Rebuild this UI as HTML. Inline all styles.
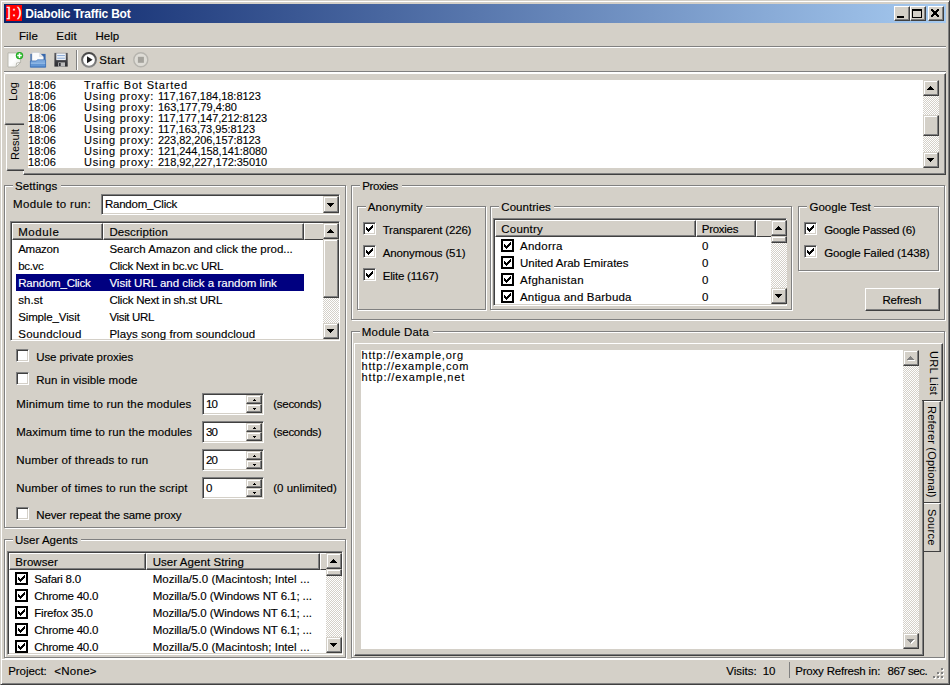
<!DOCTYPE html><html><head><meta charset="utf-8"><title>Diabolic Traffic Bot</title><style>
*{box-sizing:border-box}
html,body{margin:0;padding:0}
body{width:950px;height:685px;overflow:hidden;background:#d4d0c8;font-family:"Liberation Sans",sans-serif;font-size:12px;color:#000;position:relative}
#w div,#w span,#w svg.a{position:absolute}
#w{position:absolute;left:0;top:0;width:950px;height:685px;background:#d4d0c8;overflow:hidden}
.t{white-space:nowrap;line-height:14px;font-size:11.5px;-webkit-text-stroke:0.15px currentColor}
.grp{border:1px solid #808080;box-shadow:inset 1px 1px 0 #fff,1px 1px 0 #fff}
.gl{background:#d4d0c8;white-space:nowrap;line-height:14px;height:14px;padding-left:3px}
.sunk{border:1px solid;border-color:#808080 #fff #fff #808080;box-shadow:inset 1px 1px 0 #404040,inset -1px -1px 0 #d4d0c8}
.btn{background:#d4d0c8;border:1px solid;border-color:#fff #404040 #404040 #fff;box-shadow:inset -1px -1px 0 #808080,inset 1px 1px 0 #d4d0c8}
.hdr{background:#d4d0c8;border:1px solid;border-color:#fff #404040 #404040 #fff;box-shadow:inset -1px -1px 0 #808080;white-space:nowrap;line-height:14px}
.sb{border-color:#d4d0c8 #404040 #404040 #d4d0c8;box-shadow:inset -1px -1px 0 #808080,inset 1px 1px 0 #fff}
.hf{border-right:0;box-shadow:none}
.track{background:#eae8e4;background-image:conic-gradient(#fff 25%,#d4d0c8 0 50%,#fff 0 75%,#d4d0c8 0);background-size:2px 2px}
.fchk{border:2px solid #000;background:#fff}
.row{white-space:nowrap;line-height:17px;height:17px}
.log{font-size:11px;line-height:11px;white-space:pre;-webkit-text-stroke:0.12px currentColor}
.vt{white-space:nowrap;font-size:11px;line-height:12px;transform-origin:0 0}
</style></head><body><div id="w">
<div class="" style="left:0px;top:0px;width:950px;height:685px;border:1px solid;border-color:#d4d0c8 #404040 #404040 #d4d0c8;box-shadow:inset 1px 1px 0 #fff,inset -1px -1px 0 #808080;"></div>
<div class="" style="left:4px;top:4px;width:942px;height:19px;background:linear-gradient(90deg,#0a246a 0%,#a6caf0 100%);"></div>
<div class="" style="left:6px;top:5px;width:16px;height:16px;background:#ff0000;overflow:hidden"><span class="t" style="left:1.1px;top:-1px;letter-spacing:1.50px;color:#fff;font-size:13px;line-height:15px;-webkit-text-stroke:0.3px #fff">]:)</span></div>
<span class="t" style="left:25.2px;top:7px;letter-spacing:-0.20px;color:#fff;font-weight:bold;font-size:12px;line-height:15px;-webkit-text-stroke:0">Diabolic Traffic Bot</span>
<div class="btn" style="left:894px;top:6px;width:16px;height:15px;"><div style="left:2px;top:9px;width:7px;height:2px;background:#000"></div></div>
<div class="btn" style="left:910px;top:6px;width:16px;height:15px;"><div style="left:1px;top:2px;width:10px;height:9px;border:1px solid #000;border-top-width:2px"></div></div>
<div class="btn" style="left:928px;top:6px;width:16px;height:15px;"><svg class="a" style="left:2px;top:2px" width="8" height="8" viewBox="0 0 8 8" shape-rendering="crispEdges"><rect x="0" y="0" width="2" height="1"/><rect x="6" y="0" width="2" height="1"/><rect x="0" y="1" width="3" height="1"/><rect x="5" y="1" width="3" height="1"/><rect x="1" y="2" width="3" height="1"/><rect x="4" y="2" width="3" height="1"/><rect x="2" y="3" width="4" height="1"/><rect x="2" y="4" width="4" height="1"/><rect x="1" y="5" width="3" height="1"/><rect x="4" y="5" width="3" height="1"/><rect x="0" y="6" width="3" height="1"/><rect x="5" y="6" width="3" height="1"/><rect x="0" y="7" width="2" height="1"/><rect x="6" y="7" width="2" height="1"/></svg></div>
<span class="t" style="left:19.0px;top:29px;letter-spacing:0.09px;">File</span>
<span class="t" style="left:56.3px;top:29px;letter-spacing:0.22px;">Edit</span>
<span class="t" style="left:95.5px;top:29px;letter-spacing:-0.02px;">Help</span>
<div class="" style="left:4px;top:46px;width:942px;height:1px;background:#808080"></div>
<div class="" style="left:4px;top:47px;width:942px;height:1px;background:#fff"></div>
<div class="" style="left:4px;top:71px;width:942px;height:1px;background:#808080"></div>
<div class="" style="left:4px;top:72px;width:942px;height:1px;background:#fff"></div>
<div class="" style="left:76px;top:50px;width:1px;height:20px;background:#808080"></div>
<div class="" style="left:77px;top:50px;width:1px;height:20px;background:#fff"></div>
<svg class="a" style="left:0;top:48px" width="160" height="24" viewBox="0 0 160 24"><defs><linearGradient id="gp" x1="0" y1="0" x2="1" y2="1"><stop offset="0" stop-color="#f4f4f2"/><stop offset="0.5" stop-color="#ffffff"/><stop offset="1" stop-color="#e6e6e2"/></linearGradient><linearGradient id="gf" x1="0" y1="0" x2="0" y2="1"><stop offset="0" stop-color="#8ab4e4"/><stop offset="1" stop-color="#4a82c8"/></linearGradient><linearGradient id="gd" x1="0" y1="0" x2="0" y2="1"><stop offset="0" stop-color="#5a5a5e"/><stop offset="1" stop-color="#2c2c30"/></linearGradient><linearGradient id="gr" x1="0" y1="0" x2="0" y2="1"><stop offset="0" stop-color="#444"/><stop offset="1" stop-color="#8a8a8a"/></linearGradient></defs><path d="M8 4.9 H20.6 V14.4 L16 19 H8 Z" fill="url(#gp)" stroke="#b6b4ac" stroke-width="0.9"/><path d="M16 19 L16.6 15 L20.6 14.4 Z" fill="#f8f8f6" stroke="#b0aea6" stroke-width="0.8" stroke-linejoin="round"/><circle cx="19.5" cy="7.6" r="3.7" fill="#1fa51f"/><circle cx="19.5" cy="7.6" r="3.2" fill="#2cb82c"/><path d="M19.5 5.3 V9.9 M17.2 7.6 H21.8" stroke="#fff" stroke-width="1.5"/><path d="M30.4 5.9 H45.6 V19 H30.4 Z" fill="#3868ac"/><path d="M32 4.4 H39 L43.4 9 V13 H32 Z" fill="#fbfbfb" stroke="#c4c8d0" stroke-width="0.6"/><path d="M39 4.4 V9 H43.4 Z" fill="#e2e4e8"/><path d="M30.4 13 H36.4 L37.4 11.8 H45.6 V19.3 H30.4 Z" fill="url(#gf)" stroke="#3a6eb4" stroke-width="0.7"/><path d="M30.8 15.2 H45.2" stroke="#a4c6ee" stroke-width="0.9"/><path d="M30.8 17.3 H45.2" stroke="#6a9cd8" stroke-width="0.8"/><path d="M54.4 4.9 H67.7 V18.6 H54.4 Z" fill="url(#gd)"/><rect x="56.3" y="5.3" width="9.5" height="6.8" fill="#eef2f8"/><path d="M57.2 7.6 H64.9 M57.2 10.2 H64.9" stroke="#88a8d4" stroke-width="1"/><rect x="58.2" y="14.4" width="6.8" height="4.2" fill="#bcbcbc"/><rect x="59" y="15" width="1.7" height="3" fill="#34343a"/><circle cx="89" cy="11.8" r="6.9" fill="#fefefe" stroke="url(#gr)" stroke-width="2"/><path d="M87 8.3 L92.6 11.8 L87 15.3 Z" fill="#1c1c1c"/><circle cx="140.8" cy="11.8" r="7" fill="#dedcd6" stroke="#b6b4ae" stroke-width="1.4"/><rect x="137.9" y="8.8" width="6" height="6" fill="#a4a29c"/></svg>
<span class="t" style="left:99.3px;top:53px;letter-spacing:0.23px;">Start</span>
<div class="" style="left:23px;top:73px;width:923px;height:102px;border:1px solid;border-color:#fff #404040 #404040 #fff;box-shadow:inset -1px -1px 0 #808080;"></div>
<div class="" style="left:28px;top:80px;width:895px;height:88px;background:#fff"></div>
<div class="" style="left:6px;top:125px;width:18px;height:46px;background:#d4d0c8;border:1px solid;border-color:transparent transparent #404040 #fff;border-right:0;border-radius:2px 0 0 2px;box-shadow:inset 0 -1px 0 #808080"></div>
<div class="" style="left:4px;top:73px;width:20px;height:52px;background:#d4d0c8;border:1px solid;border-color:#fff transparent #404040 #fff;border-right:0;border-radius:2px 0 0 2px;box-shadow:inset 0 -1px 0 #808080"></div>
<span class="vt" style="left:7px;top:101px;transform:rotate(-90deg);letter-spacing:0.3px">Log</span>
<span class="vt" style="left:9px;top:160px;transform:rotate(-90deg);letter-spacing:0px">Result</span>
<span class="t log" style="left:28.1px;top:80px;letter-spacing:0.04px;">18:06</span>
<span class="t log" style="left:84.0px;top:80px;letter-spacing:0.84px;">Traffic Bot Started</span>
<span class="t log" style="left:28.1px;top:91px;letter-spacing:0.04px;">18:06</span>
<span class="t log" style="left:84.0px;top:91px;letter-spacing:0.75px;">Using proxy:</span>
<span class="t log" style="left:158.0px;top:91px;letter-spacing:-0.02px;">117,167,184,18:8123</span>
<span class="t log" style="left:28.1px;top:102px;letter-spacing:0.04px;">18:06</span>
<span class="t log" style="left:84.0px;top:102px;letter-spacing:0.75px;">Using proxy:</span>
<span class="t log" style="left:158.0px;top:102px;letter-spacing:-0.04px;">163,177,79,4:80</span>
<span class="t log" style="left:28.1px;top:113px;letter-spacing:0.04px;">18:06</span>
<span class="t log" style="left:84.0px;top:113px;letter-spacing:0.75px;">Using proxy:</span>
<span class="t log" style="left:158.0px;top:113px;letter-spacing:-0.01px;">117,177,147,212:8123</span>
<span class="t log" style="left:28.1px;top:124px;letter-spacing:0.04px;">18:06</span>
<span class="t log" style="left:84.0px;top:124px;letter-spacing:0.75px;">Using proxy:</span>
<span class="t log" style="left:158.0px;top:124px;letter-spacing:0.00px;">117,163,73,95:8123</span>
<span class="t log" style="left:28.1px;top:135px;letter-spacing:0.04px;">18:06</span>
<span class="t log" style="left:84.0px;top:135px;letter-spacing:0.75px;">Using proxy:</span>
<span class="t log" style="left:158.0px;top:135px;letter-spacing:-0.07px;">223,82,206,157:8123</span>
<span class="t log" style="left:28.1px;top:146px;letter-spacing:0.04px;">18:06</span>
<span class="t log" style="left:84.0px;top:146px;letter-spacing:0.75px;">Using proxy:</span>
<span class="t log" style="left:158.0px;top:146px;letter-spacing:-0.05px;">121,244,158,141:8080</span>
<span class="t log" style="left:28.1px;top:157px;letter-spacing:0.04px;">18:06</span>
<span class="t log" style="left:84.0px;top:157px;letter-spacing:0.75px;">Using proxy:</span>
<span class="t log" style="left:158.0px;top:157px;letter-spacing:-0.05px;">218,92,227,172:35010</span>
<div class="track" style="left:923px;top:80px;width:16px;height:88px;"></div><div class="btn sb" style="left:923px;top:80px;width:16px;height:16px;"><svg class="a" style="left:3px;top:5px" width="7" height="4" viewBox="0 0 7 4" shape-rendering="crispEdges" fill="#000"><rect x="3" y="0" width="1" height="1"/><rect x="2" y="1" width="3" height="1"/><rect x="1" y="2" width="5" height="1"/><rect x="0" y="3" width="7" height="1"/></svg></div><div class="btn sb" style="left:923px;top:152px;width:16px;height:16px;"><svg class="a" style="left:3px;top:5px" width="7" height="4" viewBox="0 0 7 4" shape-rendering="crispEdges" fill="#000"><rect x="0" y="0" width="7" height="1"/><rect x="1" y="1" width="5" height="1"/><rect x="2" y="2" width="3" height="1"/><rect x="3" y="3" width="1" height="1"/></svg></div><div class="btn sb" style="left:923px;top:115px;width:16px;height:21px;"></div>
<div class="grp" style="left:4px;top:185px;width:342px;height:343px;"></div><div class="" style="left:13px;top:185px;width:48px;height:2px;background:#d4d0c8"></div><span class="t" style="left:15.0px;top:179px;letter-spacing:0.11px;">Settings</span>
<span class="t" style="left:13.1px;top:197px;letter-spacing:0.32px;">Module to run:</span>
<div class="sunk" style="left:101px;top:194px;width:239px;height:21px;background:#fff;"><span class="t" style="left:2.9px;top:2px;letter-spacing:-0.22px;">Random_Click</span><div class="btn sb" style="left:221px;top:1px;width:16px;height:17px;"><svg class="a" style="left:3px;top:6px" width="7" height="4" viewBox="0 0 7 4" shape-rendering="crispEdges" fill="#000"><rect x="0" y="0" width="7" height="1"/><rect x="1" y="1" width="5" height="1"/><rect x="2" y="2" width="3" height="1"/><rect x="3" y="3" width="1" height="1"/></svg></div></div>
<div class="sunk" style="left:10px;top:221px;width:330px;height:120px;background:#fff;"></div>
<div class="hdr" style="left:12px;top:223px;width:91px;height:17px;"></div><span class="t" style="left:18.2px;top:225px;letter-spacing:0.58px;">Module</span>
<div class="hdr" style="left:103px;top:223px;width:201px;height:17px;"></div><span class="t" style="left:109.4px;top:225px;letter-spacing:0.09px;">Description</span>
<div class="hdr hf" style="left:304px;top:223px;width:19px;height:17px;"></div>
<span class="t" style="left:18.2px;top:242px;letter-spacing:-0.24px;">Amazon</span>
<span class="t" style="left:109.4px;top:242px;letter-spacing:-0.02px;">Search Amazon and click the prod...</span>
<span class="t" style="left:18.2px;top:259px;letter-spacing:-0.31px;">bc.vc</span>
<span class="t" style="left:109.4px;top:259px;letter-spacing:-0.28px;">Click Next in bc.vc URL</span>
<div class="" style="left:16px;top:274px;width:288px;height:17px;background:#000080"></div>
<span class="t" style="left:18.2px;top:276px;letter-spacing:-0.20px;color:#fff;">Random_Click</span>
<span class="t" style="left:109.4px;top:276px;letter-spacing:-0.00px;color:#fff;">Visit URL and click a random link</span>
<span class="t" style="left:18.2px;top:293px;letter-spacing:0.08px;">sh.st</span>
<span class="t" style="left:109.4px;top:293px;letter-spacing:-0.21px;">Click Next in sh.st URL</span>
<span class="t" style="left:18.2px;top:310px;letter-spacing:-0.13px;">Simple_Visit</span>
<span class="t" style="left:109.4px;top:310px;letter-spacing:-0.34px;">Visit URL</span>
<span class="t" style="left:18.2px;top:327px;letter-spacing:0.27px;height:13px;overflow:hidden;">Soundcloud</span>
<span class="t" style="left:109.4px;top:327px;letter-spacing:0.05px;height:13px;overflow:hidden;">Plays song from soundcloud</span>
<div class="track" style="left:323px;top:223px;width:16px;height:116px;"></div><div class="btn sb" style="left:323px;top:223px;width:16px;height:16px;"><svg class="a" style="left:3px;top:5px" width="7" height="4" viewBox="0 0 7 4" shape-rendering="crispEdges" fill="#000"><rect x="3" y="0" width="1" height="1"/><rect x="2" y="1" width="3" height="1"/><rect x="1" y="2" width="5" height="1"/><rect x="0" y="3" width="7" height="1"/></svg></div><div class="btn sb" style="left:323px;top:323px;width:16px;height:16px;"><svg class="a" style="left:3px;top:5px" width="7" height="4" viewBox="0 0 7 4" shape-rendering="crispEdges" fill="#000"><rect x="0" y="0" width="7" height="1"/><rect x="1" y="1" width="5" height="1"/><rect x="2" y="2" width="3" height="1"/><rect x="3" y="3" width="1" height="1"/></svg></div><div class="btn sb" style="left:323px;top:239px;width:16px;height:59px;"></div>
<div class="sunk" style="left:16px;top:349px;width:13px;height:13px;background:#fff;"></div>
<span class="t" style="left:36.2px;top:349.5px;letter-spacing:-0.08px;">Use private proxies</span>
<div class="sunk" style="left:16px;top:372px;width:13px;height:13px;background:#fff;"></div>
<span class="t" style="left:36.2px;top:372.5px;letter-spacing:0.05px;">Run in visible mode</span>
<span class="t" style="left:16.2px;top:396.5px;letter-spacing:0.17px;">Minimum time to run the modules</span>
<div class="sunk" style="left:202px;top:393px;width:62px;height:22px;background:#fff;"><span class="t" style="left:2.9px;top:2.5px;letter-spacing:-0.70px;">10</span><div class="btn sb" style="left:43px;top:1px;width:16px;height:9px;"><svg class="a" style="left:6px;top:3px" width="3" height="2" viewBox="0 0 3 2" shape-rendering="crispEdges" fill="#000"><rect x="1" y="0" width="1" height="1"/><rect x="0" y="1" width="3" height="1"/></svg></div><div class="btn sb" style="left:43px;top:10px;width:16px;height:9px;"><svg class="a" style="left:6px;top:3px" width="3" height="2" viewBox="0 0 3 2" shape-rendering="crispEdges" fill="#000"><rect x="0" y="0" width="3" height="1"/><rect x="1" y="1" width="1" height="1"/></svg></div></div>
<span class="t" style="left:273.2px;top:396.5px;letter-spacing:-0.26px;">(seconds)</span>
<span class="t" style="left:16.2px;top:424.5px;letter-spacing:0.09px;">Maximum time to run the modules</span>
<div class="sunk" style="left:202px;top:421px;width:62px;height:22px;background:#fff;"><span class="t" style="left:2.9px;top:2.5px;letter-spacing:-0.70px;">30</span><div class="btn sb" style="left:43px;top:1px;width:16px;height:9px;"><svg class="a" style="left:6px;top:3px" width="3" height="2" viewBox="0 0 3 2" shape-rendering="crispEdges" fill="#000"><rect x="1" y="0" width="1" height="1"/><rect x="0" y="1" width="3" height="1"/></svg></div><div class="btn sb" style="left:43px;top:10px;width:16px;height:9px;"><svg class="a" style="left:6px;top:3px" width="3" height="2" viewBox="0 0 3 2" shape-rendering="crispEdges" fill="#000"><rect x="0" y="0" width="3" height="1"/><rect x="1" y="1" width="1" height="1"/></svg></div></div>
<span class="t" style="left:273.2px;top:424.5px;letter-spacing:-0.26px;">(seconds)</span>
<span class="t" style="left:16.2px;top:452.5px;letter-spacing:0.18px;">Number of threads to run</span>
<div class="sunk" style="left:202px;top:449px;width:62px;height:22px;background:#fff;"><span class="t" style="left:2.9px;top:2.5px;letter-spacing:-0.70px;">20</span><div class="btn sb" style="left:43px;top:1px;width:16px;height:9px;"><svg class="a" style="left:6px;top:3px" width="3" height="2" viewBox="0 0 3 2" shape-rendering="crispEdges" fill="#000"><rect x="1" y="0" width="1" height="1"/><rect x="0" y="1" width="3" height="1"/></svg></div><div class="btn sb" style="left:43px;top:10px;width:16px;height:9px;"><svg class="a" style="left:6px;top:3px" width="3" height="2" viewBox="0 0 3 2" shape-rendering="crispEdges" fill="#000"><rect x="0" y="0" width="3" height="1"/><rect x="1" y="1" width="1" height="1"/></svg></div></div>
<span class="t" style="left:16.2px;top:480.5px;letter-spacing:0.14px;">Number of times to run the script</span>
<div class="sunk" style="left:202px;top:477px;width:62px;height:22px;background:#fff;"><span class="t" style="left:2.9px;top:2.5px;letter-spacing:-0.01px;">0</span><div class="btn sb" style="left:43px;top:1px;width:16px;height:9px;"><svg class="a" style="left:6px;top:3px" width="3" height="2" viewBox="0 0 3 2" shape-rendering="crispEdges" fill="#000"><rect x="1" y="0" width="1" height="1"/><rect x="0" y="1" width="3" height="1"/></svg></div><div class="btn sb" style="left:43px;top:10px;width:16px;height:9px;"><svg class="a" style="left:6px;top:3px" width="3" height="2" viewBox="0 0 3 2" shape-rendering="crispEdges" fill="#000"><rect x="0" y="0" width="3" height="1"/><rect x="1" y="1" width="1" height="1"/></svg></div></div>
<span class="t" style="left:273.2px;top:480.5px;letter-spacing:0.03px;">(0 unlimited)</span>
<div class="sunk" style="left:16px;top:507px;width:13px;height:13px;background:#fff;"></div>
<span class="t" style="left:36.2px;top:507.5px;letter-spacing:-0.11px;">Never repeat the same proxy</span>
<div class="grp" style="left:4px;top:539px;width:342px;height:119px;"></div><div class="" style="left:13px;top:539px;width:68px;height:2px;background:#d4d0c8"></div><span class="t" style="left:15.0px;top:533px;letter-spacing:0.01px;">User Agents</span>
<div class="sunk" style="left:7px;top:551px;width:336px;height:104px;background:#fff;"></div>
<div class="hdr" style="left:9px;top:553px;width:137px;height:17px;"></div><span class="t" style="left:15.3px;top:555px;letter-spacing:0.05px;">Browser</span>
<div class="hdr" style="left:146px;top:553px;width:174px;height:17px;"></div><span class="t" style="left:152.7px;top:555px;letter-spacing:0.06px;">User Agent String</span>
<div class="hdr hf" style="left:320px;top:553px;width:6px;height:17px;"></div>
<div class="fchk" style="left:15px;top:572px;width:13px;height:13px;"><svg width="9" height="9" viewBox="0 0 9 9" shape-rendering="crispEdges" style="position:absolute;left:0;top:0"><rect x="1" y="3" width="1" height="3"/><rect x="2" y="4" width="1" height="3"/><rect x="3" y="5" width="1" height="3"/><rect x="4" y="4" width="1" height="3"/><rect x="5" y="3" width="1" height="3"/><rect x="6" y="2" width="1" height="3"/><rect x="7" y="1" width="1" height="3"/></svg></div>
<span class="t" style="left:34.2px;top:572px;letter-spacing:-0.26px;">Safari 8.0</span>
<span class="t" style="left:152.7px;top:572px;letter-spacing:0.05px;">Mozilla/5.0 (Macintosh; Intel ...</span>
<div class="fchk" style="left:15px;top:589px;width:13px;height:13px;"><svg width="9" height="9" viewBox="0 0 9 9" shape-rendering="crispEdges" style="position:absolute;left:0;top:0"><rect x="1" y="3" width="1" height="3"/><rect x="2" y="4" width="1" height="3"/><rect x="3" y="5" width="1" height="3"/><rect x="4" y="4" width="1" height="3"/><rect x="5" y="3" width="1" height="3"/><rect x="6" y="2" width="1" height="3"/><rect x="7" y="1" width="1" height="3"/></svg></div>
<span class="t" style="left:34.2px;top:589px;letter-spacing:-0.23px;">Chrome 40.0</span>
<span class="t" style="left:152.7px;top:589px;letter-spacing:-0.09px;">Mozilla/5.0 (Windows NT 6.1; ...</span>
<div class="fchk" style="left:15px;top:606px;width:13px;height:13px;"><svg width="9" height="9" viewBox="0 0 9 9" shape-rendering="crispEdges" style="position:absolute;left:0;top:0"><rect x="1" y="3" width="1" height="3"/><rect x="2" y="4" width="1" height="3"/><rect x="3" y="5" width="1" height="3"/><rect x="4" y="4" width="1" height="3"/><rect x="5" y="3" width="1" height="3"/><rect x="6" y="2" width="1" height="3"/><rect x="7" y="1" width="1" height="3"/></svg></div>
<span class="t" style="left:34.2px;top:606px;letter-spacing:-0.19px;">Firefox 35.0</span>
<span class="t" style="left:152.7px;top:606px;letter-spacing:-0.09px;">Mozilla/5.0 (Windows NT 6.1; ...</span>
<div class="fchk" style="left:15px;top:623px;width:13px;height:13px;"><svg width="9" height="9" viewBox="0 0 9 9" shape-rendering="crispEdges" style="position:absolute;left:0;top:0"><rect x="1" y="3" width="1" height="3"/><rect x="2" y="4" width="1" height="3"/><rect x="3" y="5" width="1" height="3"/><rect x="4" y="4" width="1" height="3"/><rect x="5" y="3" width="1" height="3"/><rect x="6" y="2" width="1" height="3"/><rect x="7" y="1" width="1" height="3"/></svg></div>
<span class="t" style="left:34.2px;top:623px;letter-spacing:-0.23px;">Chrome 40.0</span>
<span class="t" style="left:152.7px;top:623px;letter-spacing:-0.09px;">Mozilla/5.0 (Windows NT 6.1; ...</span>
<div class="fchk" style="left:15px;top:640px;width:13px;height:13px;"><svg width="9" height="9" viewBox="0 0 9 9" shape-rendering="crispEdges" style="position:absolute;left:0;top:0"><rect x="1" y="3" width="1" height="3"/><rect x="2" y="4" width="1" height="3"/><rect x="3" y="5" width="1" height="3"/><rect x="4" y="4" width="1" height="3"/><rect x="5" y="3" width="1" height="3"/><rect x="6" y="2" width="1" height="3"/><rect x="7" y="1" width="1" height="3"/></svg></div>
<span class="t" style="left:34.2px;top:640px;letter-spacing:-0.23px;">Chrome 40.0</span>
<span class="t" style="left:152.7px;top:640px;letter-spacing:0.05px;">Mozilla/5.0 (Macintosh; Intel ...</span>
<div class="track" style="left:326px;top:553px;width:16px;height:100px;"></div><div class="btn sb" style="left:326px;top:553px;width:16px;height:16px;"><svg class="a" style="left:3px;top:5px" width="7" height="4" viewBox="0 0 7 4" shape-rendering="crispEdges" fill="#000"><rect x="3" y="0" width="1" height="1"/><rect x="2" y="1" width="3" height="1"/><rect x="1" y="2" width="5" height="1"/><rect x="0" y="3" width="7" height="1"/></svg></div><div class="btn sb" style="left:326px;top:637px;width:16px;height:16px;"><svg class="a" style="left:3px;top:5px" width="7" height="4" viewBox="0 0 7 4" shape-rendering="crispEdges" fill="#000"><rect x="0" y="0" width="7" height="1"/><rect x="1" y="1" width="5" height="1"/><rect x="2" y="2" width="3" height="1"/><rect x="3" y="3" width="1" height="1"/></svg></div><div class="btn sb" style="left:326px;top:569px;width:16px;height:7px;"></div>
<div class="grp" style="left:351px;top:185px;width:594px;height:135px;"></div><div class="" style="left:360px;top:185px;width:42px;height:2px;background:#d4d0c8"></div><span class="t" style="left:362.2px;top:179px;letter-spacing:-0.38px;">Proxies</span>
<div class="grp" style="left:357px;top:206px;width:129px;height:104px;"></div><div class="" style="left:366px;top:206px;width:60px;height:2px;background:#d4d0c8"></div><span class="t" style="left:367.8px;top:200px;letter-spacing:0.13px;">Anonymity</span>
<div class="sunk" style="left:363px;top:222px;width:13px;height:13px;background:#fff;"><svg width="13" height="13" viewBox="0 0 13 13" shape-rendering="crispEdges" style="position:absolute;left:-1px;top:-1px"><rect x="3" y="5" width="1" height="3"/><rect x="4" y="6" width="1" height="3"/><rect x="5" y="7" width="1" height="3"/><rect x="6" y="6" width="1" height="3"/><rect x="7" y="5" width="1" height="3"/><rect x="8" y="4" width="1" height="3"/><rect x="9" y="3" width="1" height="3"/></svg></div>
<span class="t" style="left:382.7px;top:222.5px;letter-spacing:-0.18px;">Transparent (226)</span>
<div class="sunk" style="left:363px;top:245px;width:13px;height:13px;background:#fff;"><svg width="13" height="13" viewBox="0 0 13 13" shape-rendering="crispEdges" style="position:absolute;left:-1px;top:-1px"><rect x="3" y="5" width="1" height="3"/><rect x="4" y="6" width="1" height="3"/><rect x="5" y="7" width="1" height="3"/><rect x="6" y="6" width="1" height="3"/><rect x="7" y="5" width="1" height="3"/><rect x="8" y="4" width="1" height="3"/><rect x="9" y="3" width="1" height="3"/></svg></div>
<span class="t" style="left:382.7px;top:245.5px;letter-spacing:-0.12px;">Anonymous (51)</span>
<div class="sunk" style="left:363px;top:268px;width:13px;height:13px;background:#fff;"><svg width="13" height="13" viewBox="0 0 13 13" shape-rendering="crispEdges" style="position:absolute;left:-1px;top:-1px"><rect x="3" y="5" width="1" height="3"/><rect x="4" y="6" width="1" height="3"/><rect x="5" y="7" width="1" height="3"/><rect x="6" y="6" width="1" height="3"/><rect x="7" y="5" width="1" height="3"/><rect x="8" y="4" width="1" height="3"/><rect x="9" y="3" width="1" height="3"/></svg></div>
<span class="t" style="left:382.7px;top:268.5px;letter-spacing:-0.19px;">Elite (1167)</span>
<div class="grp" style="left:490px;top:206px;width:302px;height:104px;"></div><div class="" style="left:499px;top:206px;width:55px;height:2px;background:#d4d0c8"></div><span class="t" style="left:501.3px;top:200px;letter-spacing:0.04px;">Countries</span>
<div class="sunk" style="left:493px;top:218px;width:294px;height:88px;background:#fff;"></div>
<div class="hdr" style="left:495px;top:220px;width:201px;height:17px;"></div><span class="t" style="left:501.3px;top:222px;letter-spacing:0.19px;">Country</span>
<div class="hdr" style="left:696px;top:220px;width:60px;height:17px;"></div><span class="t" style="left:701.8px;top:222px;letter-spacing:-0.29px;">Proxies</span>
<div class="hdr hf" style="left:756px;top:220px;width:15px;height:17px;"></div>
<div class="fchk" style="left:501px;top:239px;width:13px;height:13px;"><svg width="9" height="9" viewBox="0 0 9 9" shape-rendering="crispEdges" style="position:absolute;left:0;top:0"><rect x="1" y="3" width="1" height="3"/><rect x="2" y="4" width="1" height="3"/><rect x="3" y="5" width="1" height="3"/><rect x="4" y="4" width="1" height="3"/><rect x="5" y="3" width="1" height="3"/><rect x="6" y="2" width="1" height="3"/><rect x="7" y="1" width="1" height="3"/></svg></div>
<span class="t" style="left:520.0px;top:239px;letter-spacing:0.26px;">Andorra</span>
<span class="t" style="left:702.0px;top:239px;letter-spacing:0.39px;">0</span>
<div class="fchk" style="left:501px;top:256px;width:13px;height:13px;"><svg width="9" height="9" viewBox="0 0 9 9" shape-rendering="crispEdges" style="position:absolute;left:0;top:0"><rect x="1" y="3" width="1" height="3"/><rect x="2" y="4" width="1" height="3"/><rect x="3" y="5" width="1" height="3"/><rect x="4" y="4" width="1" height="3"/><rect x="5" y="3" width="1" height="3"/><rect x="6" y="2" width="1" height="3"/><rect x="7" y="1" width="1" height="3"/></svg></div>
<span class="t" style="left:520.0px;top:256px;letter-spacing:-0.01px;">United Arab Emirates</span>
<span class="t" style="left:702.0px;top:256px;letter-spacing:0.39px;">0</span>
<div class="fchk" style="left:501px;top:273px;width:13px;height:13px;"><svg width="9" height="9" viewBox="0 0 9 9" shape-rendering="crispEdges" style="position:absolute;left:0;top:0"><rect x="1" y="3" width="1" height="3"/><rect x="2" y="4" width="1" height="3"/><rect x="3" y="5" width="1" height="3"/><rect x="4" y="4" width="1" height="3"/><rect x="5" y="3" width="1" height="3"/><rect x="6" y="2" width="1" height="3"/><rect x="7" y="1" width="1" height="3"/></svg></div>
<span class="t" style="left:520.0px;top:273px;letter-spacing:0.28px;">Afghanistan</span>
<span class="t" style="left:702.0px;top:273px;letter-spacing:0.39px;">0</span>
<div class="fchk" style="left:501px;top:290px;width:13px;height:13px;"><svg width="9" height="9" viewBox="0 0 9 9" shape-rendering="crispEdges" style="position:absolute;left:0;top:0"><rect x="1" y="3" width="1" height="3"/><rect x="2" y="4" width="1" height="3"/><rect x="3" y="5" width="1" height="3"/><rect x="4" y="4" width="1" height="3"/><rect x="5" y="3" width="1" height="3"/><rect x="6" y="2" width="1" height="3"/><rect x="7" y="1" width="1" height="3"/></svg></div>
<span class="t" style="left:520.0px;top:290px;letter-spacing:0.19px;">Antigua and Barbuda</span>
<span class="t" style="left:702.0px;top:290px;letter-spacing:0.39px;">0</span>
<div class="track" style="left:771px;top:220px;width:16px;height:84px;"></div><div class="btn sb" style="left:771px;top:220px;width:16px;height:16px;"><svg class="a" style="left:3px;top:5px" width="7" height="4" viewBox="0 0 7 4" shape-rendering="crispEdges" fill="#000"><rect x="3" y="0" width="1" height="1"/><rect x="2" y="1" width="3" height="1"/><rect x="1" y="2" width="5" height="1"/><rect x="0" y="3" width="7" height="1"/></svg></div><div class="btn sb" style="left:771px;top:288px;width:16px;height:16px;"><svg class="a" style="left:3px;top:5px" width="7" height="4" viewBox="0 0 7 4" shape-rendering="crispEdges" fill="#000"><rect x="0" y="0" width="7" height="1"/><rect x="1" y="1" width="5" height="1"/><rect x="2" y="2" width="3" height="1"/><rect x="3" y="3" width="1" height="1"/></svg></div><div class="btn sb" style="left:771px;top:236px;width:16px;height:7px;"></div>
<div class="grp" style="left:798px;top:206px;width:141px;height:65px;"></div><div class="" style="left:807px;top:206px;width:67px;height:2px;background:#d4d0c8"></div><span class="t" style="left:809.5px;top:200px;letter-spacing:0.01px;">Google Test</span>
<div class="sunk" style="left:804px;top:222px;width:13px;height:13px;background:#fff;"><svg width="13" height="13" viewBox="0 0 13 13" shape-rendering="crispEdges" style="position:absolute;left:-1px;top:-1px"><rect x="3" y="5" width="1" height="3"/><rect x="4" y="6" width="1" height="3"/><rect x="5" y="7" width="1" height="3"/><rect x="6" y="6" width="1" height="3"/><rect x="7" y="5" width="1" height="3"/><rect x="8" y="4" width="1" height="3"/><rect x="9" y="3" width="1" height="3"/></svg></div>
<span class="t" style="left:824.2px;top:222.5px;letter-spacing:-0.28px;">Google Passed (6)</span>
<div class="sunk" style="left:804px;top:245px;width:13px;height:13px;background:#fff;"><svg width="13" height="13" viewBox="0 0 13 13" shape-rendering="crispEdges" style="position:absolute;left:-1px;top:-1px"><rect x="3" y="5" width="1" height="3"/><rect x="4" y="6" width="1" height="3"/><rect x="5" y="7" width="1" height="3"/><rect x="6" y="6" width="1" height="3"/><rect x="7" y="5" width="1" height="3"/><rect x="8" y="4" width="1" height="3"/><rect x="9" y="3" width="1" height="3"/></svg></div>
<span class="t" style="left:824.2px;top:245.5px;letter-spacing:-0.14px;">Google Failed (1438)</span>
<div class="btn" style="left:865px;top:288px;width:75px;height:23px;"></div>
<span class="t" style="left:882.4px;top:293px;letter-spacing:-0.21px;">Refresh</span>
<div class="grp" style="left:351px;top:331px;width:594px;height:327px;"></div><div class="" style="left:360px;top:331px;width:73px;height:2px;background:#d4d0c8"></div><span class="t" style="left:361.8px;top:325px;letter-spacing:0.18px;">Module Data</span>
<div class="" style="left:354px;top:343px;width:570px;height:313px;border:1px solid;border-color:#fff #404040 #404040 #fff;box-shadow:inset -1px -1px 0 #808080;"></div>
<div class="" style="left:361px;top:350px;width:542px;height:299px;background:#fff"></div>
<span class="t log" style="left:361.5px;top:350px;letter-spacing:0.80px;">http://example,org</span>
<span class="t log" style="left:361.5px;top:361px;letter-spacing:0.82px;">http://example,com</span>
<span class="t log" style="left:361.5px;top:372px;letter-spacing:0.90px;">http://example,net</span>
<div class="track" style="left:903px;top:350px;width:16px;height:299px;"></div><div class="btn sb" style="left:903px;top:350px;width:16px;height:16px;"><svg class="a" style="left:4px;top:6px" width="7" height="4" viewBox="0 0 7 4" shape-rendering="crispEdges" fill="#fff"><rect x="3" y="0" width="1" height="1"/><rect x="2" y="1" width="3" height="1"/><rect x="1" y="2" width="5" height="1"/><rect x="0" y="3" width="7" height="1"/></svg><svg class="a" style="left:3px;top:5px" width="7" height="4" viewBox="0 0 7 4" shape-rendering="crispEdges" fill="#808080"><rect x="3" y="0" width="1" height="1"/><rect x="2" y="1" width="3" height="1"/><rect x="1" y="2" width="5" height="1"/><rect x="0" y="3" width="7" height="1"/></svg></div><div class="btn sb" style="left:903px;top:633px;width:16px;height:16px;"><svg class="a" style="left:4px;top:6px" width="7" height="4" viewBox="0 0 7 4" shape-rendering="crispEdges" fill="#fff"><rect x="0" y="0" width="7" height="1"/><rect x="1" y="1" width="5" height="1"/><rect x="2" y="2" width="3" height="1"/><rect x="3" y="3" width="1" height="1"/></svg><svg class="a" style="left:3px;top:5px" width="7" height="4" viewBox="0 0 7 4" shape-rendering="crispEdges" fill="#808080"><rect x="0" y="0" width="7" height="1"/><rect x="1" y="1" width="5" height="1"/><rect x="2" y="2" width="3" height="1"/><rect x="3" y="3" width="1" height="1"/></svg></div>
<div class="" style="left:924px;top:401px;width:17px;height:102px;background:#d4d0c8;border:1px solid;border-color:#fff #404040 #404040 transparent;border-left:0;box-shadow:inset -1px 0 0 #808080"></div>
<div class="" style="left:924px;top:503px;width:17px;height:49px;background:#d4d0c8;border:1px solid;border-color:#fff #404040 #404040 transparent;border-left:0;box-shadow:inset -1px 0 0 #808080"></div>
<div class="" style="left:922px;top:343px;width:21px;height:58px;background:#d4d0c8;border:1px solid;border-color:#fff #404040 #404040 transparent;border-left:0;box-shadow:inset -1px 0 0 #808080"></div>
<span class="vt" style="left:940px;top:351px;transform:rotate(90deg);letter-spacing:0.3px">URL List</span>
<span class="vt" style="left:938px;top:406px;transform:rotate(90deg);letter-spacing:0.2px">Referer (Optional)</span>
<span class="vt" style="left:938px;top:509px;transform:rotate(90deg);letter-spacing:0.3px">Source</span>
<span class="t" style="left:8.2px;top:664px;letter-spacing:-0.06px;">Project:</span>
<span class="t" style="left:54.2px;top:664px;letter-spacing:0.29px;">&lt;None&gt;</span>
<span class="t" style="left:726.2px;top:664px;letter-spacing:-0.01px;">Visits:</span>
<span class="t" style="left:762.7px;top:664px;letter-spacing:-0.20px;">10</span>
<span class="t" style="left:795.2px;top:664px;letter-spacing:-0.19px;">Proxy Refresh in:</span>
<span class="t" style="left:887.5px;top:664px;letter-spacing:-0.48px;">867 sec.</span>
<div class="" style="left:789px;top:662px;width:1px;height:16px;background:#808080"></div>
<svg class="a" style="left:930px;top:665px" width="16" height="16" viewBox="930 665 16 16" shape-rendering="crispEdges"><rect x="942" y="669" width="2" height="2" fill="#fff"/><rect x="941" y="668" width="2" height="2" fill="#808080"/><rect x="938" y="673" width="2" height="2" fill="#fff"/><rect x="937" y="672" width="2" height="2" fill="#808080"/><rect x="942" y="673" width="2" height="2" fill="#fff"/><rect x="941" y="672" width="2" height="2" fill="#808080"/><rect x="934" y="677" width="2" height="2" fill="#fff"/><rect x="933" y="676" width="2" height="2" fill="#808080"/><rect x="938" y="677" width="2" height="2" fill="#fff"/><rect x="937" y="676" width="2" height="2" fill="#808080"/><rect x="942" y="677" width="2" height="2" fill="#fff"/><rect x="941" y="676" width="2" height="2" fill="#808080"/></svg>
<div class="" style="left:2px;top:659px;width:944px;height:1px;background:#fff"></div>
</div></body></html>
